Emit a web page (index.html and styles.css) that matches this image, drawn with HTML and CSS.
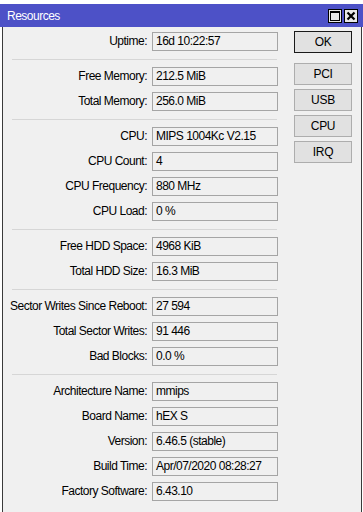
FILE: index.html
```html
<!DOCTYPE html>
<html>
<head>
<meta charset="utf-8">
<link rel="stylesheet" href="styles.css">
</head>
<body>
<div class="window">
  <div class="titlebar">
    <span class="title">Resources</span>
    <div class="tb-buttons">
      <span class="tb-btn"><span class="max-icon"></span></span>
      <span class="tb-btn">
        <svg width="10" height="10" viewBox="0 0 10 10"><path d="M1.5 1.5 L8.5 8.5 M8.5 1.5 L1.5 8.5" stroke="#000" stroke-width="2.2" fill="none"/></svg>
      </span>
    </div>
  </div>
  <div class="panel">
    <div class="fields">
      <div class="group">
        <label>Uptime:</label><div class="field">16d 10:22:57</div>
      </div>
      <div class="sep"></div>
      <div class="group">
        <label>Free Memory:</label><div class="field">212.5 MiB</div>
        <label>Total Memory:</label><div class="field">256.0 MiB</div>
      </div>
      <div class="sep"></div>
      <div class="group">
        <label>CPU:</label><div class="field">MIPS 1004Kc V2.15</div>
        <label>CPU Count:</label><div class="field">4</div>
        <label>CPU Frequency:</label><div class="field">880 MHz</div>
        <label>CPU Load:</label><div class="field">0 %</div>
      </div>
      <div class="sep"></div>
      <div class="group">
        <label>Free HDD Space:</label><div class="field">4968 KiB</div>
        <label>Total HDD Size:</label><div class="field">16.3 MiB</div>
      </div>
      <div class="sep"></div>
      <div class="group">
        <label>Sector Writes Since Reboot:</label><div class="field">27 594</div>
        <label>Total Sector Writes:</label><div class="field">91 446</div>
        <label>Bad Blocks:</label><div class="field">0.0 %</div>
      </div>
      <div class="sep"></div>
      <div class="group">
        <label>Architecture Name:</label><div class="field">mmips</div>
        <label>Board Name:</label><div class="field">hEX S</div>
        <label>Version:</label><div class="field">6.46.5 (stable)</div>
        <label>Build Time:</label><div class="field">Apr/07/2020 08:28:27</div>
        <label>Factory Software:</label><div class="field">6.43.10</div>
      </div>
    </div>
    <div class="buttons">
      <button class="btn default">OK</button>
      <div class="btn-list">
        <button class="btn">PCI</button>
        <button class="btn">USB</button>
        <button class="btn">CPU</button>
        <button class="btn">IRQ</button>
      </div>
    </div>
  </div>
</div>
</body>
</html>
```
FILE: styles.css
```css
html, body {
  margin: 0;
  padding: 0;
  background: #ffffff;
}
body {
  padding-top: 4px;
  font-family: "Liberation Sans", Arial, sans-serif;
  font-size: 12px;
  letter-spacing: -0.5px;
  color: #000;
}
.window {
  width: 363px;
}
.titlebar {
  height: 23px;
  background: #4d51c7;
  display: flex;
  align-items: center;
  justify-content: space-between;
  padding: 0 5px 0 7px;
  box-sizing: border-box;
}
.title {
  color: #fff;
  font-size: 12px;
  letter-spacing: -0.5px;
}
.tb-buttons {
  display: flex;
  gap: 2px;
}
.tb-btn {
  width: 14px;
  height: 14px;
  box-sizing: border-box;
  border: 1px solid #000;
  background: #e8e8e8;
  display: flex;
  align-items: center;
  justify-content: center;
}
.max-icon {
  width: 10px;
  height: 10px;
  box-sizing: border-box;
  border: 1px solid #000;
  border-top-width: 2px;
}
.panel {
  margin: 0 1px 0 2px;
  border-left: 1px solid #3a3a3a;
  border-right: 1px solid #3a3a3a;
  border-bottom: 2px solid #6a6a6a;
  background: #f0f0f0;
  display: flex;
  padding: 4px 0 8px 0;
  height: 484px;
  box-sizing: content-box;
}
.fields {
  padding-top: 1px;
  width: 275px;
}
.group {
  display: grid;
  grid-template-columns: 144px 126px;
  column-gap: 5px;
  grid-auto-rows: 19px;
  row-gap: 6px;
}
.group label {
  text-align: right;
  line-height: 19px;
  white-space: nowrap;
}
.field {
  box-sizing: border-box;
  height: 19px;
  border: 1px solid #a5a5a5;
  background: #f0f0f0;
  padding-left: 3px;
  line-height: 17px;
  white-space: nowrap;
}
.sep {
  margin: 8px 0 7px 9px;
  height: 1px;
  background: #d6d6d6;
  width: 265px;
}
.buttons {
  margin-left: 16px;
  display: flex;
  flex-direction: column;
  gap: 10px;
}
.btn-list {
  display: flex;
  flex-direction: column;
  gap: 4px;
}
.btn {
  width: 58px;
  height: 22px;
  box-sizing: border-box;
  border: 1px solid #adadad;
  background: #e1e1e1;
  font-family: "Liberation Sans", Arial, sans-serif;
  font-size: 12px;
  letter-spacing: -0.3px;
  color: #000;
  padding: 0;
  margin: 0;
}
.btn.default {
  border: 1px solid #1a1a1a;
}
```
